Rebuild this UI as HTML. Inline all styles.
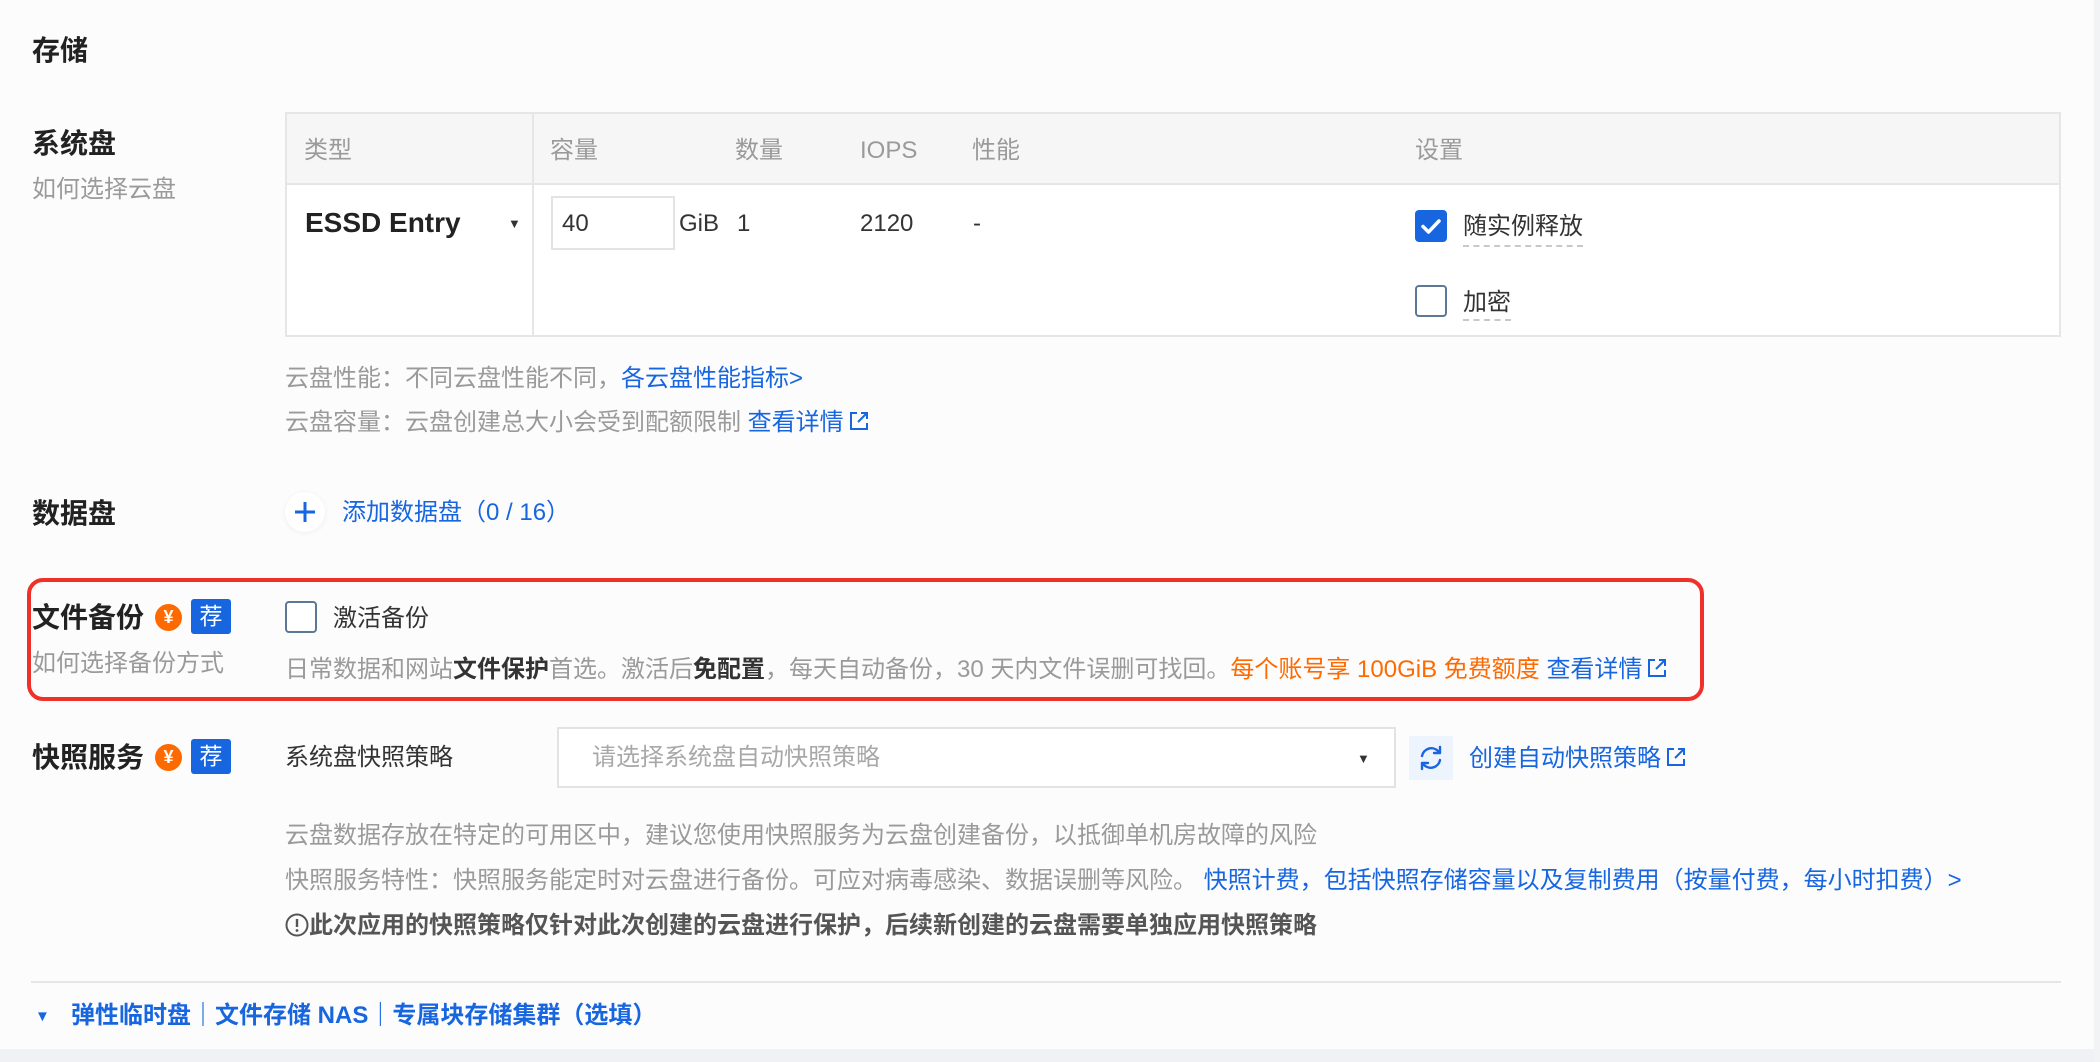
<!DOCTYPE html>
<html><head><meta charset="utf-8">
<style>
*{margin:0;padding:0;box-sizing:border-box}
body{width:2100px;height:1062px;background:#fcfcfc;font-family:"Liberation Sans","Noto Sans CJK SC",sans-serif;font-size:24px;color:#333;position:relative;overflow:hidden}
.a{position:absolute;white-space:nowrap;line-height:1}
.t{font-size:28px;font-weight:bold;color:#222}
.g{color:#9a9a9a}
.b{color:#1766e0}
.o{color:#ff6a00}
.cb{position:absolute;width:32px;height:32px;border:2px solid #5b7896;border-radius:4px;background:#fff}
.yen{position:absolute;width:27px;height:27px;border-radius:50%;background:#ff6a00;color:#fff;font-size:18px;font-weight:bold;text-align:center;line-height:27px}
.rec{position:absolute;width:40px;height:35px;border-radius:3px;background:#1766e0;color:#fff;font-size:23px;text-align:center;line-height:35px}
.ext{display:inline-block;vertical-align:-2px;margin-left:4px}
</style></head><body>
<div class="a t" style="left:32px;top:37px">存储</div>

<div class="a t" style="left:32px;top:130px">系统盘</div>
<div class="a g" style="left:32px;top:178px">如何选择云盘</div>

<div style="position:absolute;left:285px;top:112px;width:1776px;height:225px;border:2px solid #e6e6e6;background:#fff"></div>
<div style="position:absolute;left:287px;top:114px;width:1772px;height:71px;background:#f6f6f6;border-bottom:2px solid #e6e6e6"></div>
<div style="position:absolute;left:532px;top:114px;width:2px;height:221px;background:#e6e6e6"></div>
<div class="a g" style="left:304px;top:139px">类型</div>
<div class="a g" style="left:550px;top:139px">容量</div>
<div class="a g" style="left:735px;top:139px">数量</div>
<div class="a g" style="left:860px;top:139px">IOPS</div>
<div class="a g" style="left:972px;top:139px">性能</div>
<div class="a g" style="left:1415px;top:139px">设置</div>

<div class="a" style="left:305px;top:209px;font-size:28px;font-weight:bold;color:#222">ESSD Entry</div>
<div class="a" style="left:508px;top:217px;font-size:13px;color:#333">▼</div>
<div style="position:absolute;left:551px;top:196px;width:124px;height:54px;border:2px solid #e3e3e3;background:#fff"></div>
<div class="a" style="left:562px;top:212px;font-size:24px">40</div>
<div class="a" style="left:679px;top:212px;font-size:24px">GiB</div>
<div class="a" style="left:737px;top:212px;font-size:24px">1</div>
<div class="a" style="left:860px;top:212px;font-size:24px">2120</div>
<div class="a" style="left:973px;top:212px;font-size:24px">-</div>

<div style="position:absolute;left:1415px;top:210px;width:32px;height:32px;border-radius:4px;background:#1766e0">
<svg width="32" height="32" viewBox="0 0 32 32"><path d="M8 16.5l5.5 5.5 10.5-11" stroke="#fff" stroke-width="3.5" fill="none" stroke-linecap="round" stroke-linejoin="round"/></svg></div>
<div class="a" style="left:1463px;top:215px">随实例释放</div>
<div style="position:absolute;left:1463px;top:245px;width:120px;border-top:2px dashed #c8c8c8"></div>
<div class="cb" style="left:1415px;top:285px"></div>
<div class="a" style="left:1463px;top:291px">加密</div>
<div style="position:absolute;left:1463px;top:319px;width:48px;border-top:2px dashed #c8c8c8"></div>

<div class="a g" style="left:285px;top:367px">云盘性能：不同云盘性能不同，<span class="b">各云盘性能指标&gt;</span></div>
<div class="a g" style="left:285px;top:410px">云盘容量：云盘创建总大小会受到配额限制 <span class="b">查看详情<svg class="ext" width="22" height="22" viewBox="0 0 22 22"><path d="M9 3H3v16h16v-6M13 3h6v6M19 3l-9 9" stroke="#1766e0" stroke-width="2" fill="none"/></svg></span></div>

<div class="a t" style="left:32px;top:500px">数据盘</div>
<div style="position:absolute;left:285px;top:492px;width:40px;height:40px;border-radius:50%;background:#fff;box-shadow:0 1px 6px rgba(0,0,0,.06)">
<svg width="40" height="40" viewBox="0 0 40 40"><path d="M20 10v20M10 20h20" stroke="#1766e0" stroke-width="3"/></svg></div>
<div class="a b" style="left:342px;top:501px">添加数据盘（0 / 16）</div>

<div style="position:absolute;left:27px;top:578px;width:1677px;height:123px;border:4px solid #f2302a;border-radius:16px"></div>
<div class="a t" style="left:32px;top:604px">文件备份</div>
<div class="yen" style="left:155px;top:604px">¥</div>
<div class="rec" style="left:191px;top:599px">荐</div>
<div class="a g" style="left:32px;top:652px">如何选择备份方式</div>
<div class="cb" style="left:285px;top:601px"></div>
<div class="a" style="left:333px;top:607px">激活备份</div>
<div class="a g" style="left:285px;top:657px">日常数据和网站<b style="color:#333">文件保护</b>首选。激活后<b style="color:#333">免配置</b>，每天自动备份，30 天内文件误删可找回。<span class="o">每个账号享 100GiB 免费额度</span> <span class="b">查看详情<svg class="ext" width="22" height="22" viewBox="0 0 22 22"><path d="M9 3H3v16h16v-6M13 3h6v6M19 3l-9 9" stroke="#1766e0" stroke-width="2" fill="none"/></svg></span></div>

<div class="a t" style="left:32px;top:744px">快照服务</div>
<div class="yen" style="left:155px;top:744px">¥</div>
<div class="rec" style="left:191px;top:739px">荐</div>
<div class="a" style="left:285px;top:746px">系统盘快照策略</div>
<div style="position:absolute;left:557px;top:727px;width:839px;height:61px;border:2px solid #e3e3e3;background:#fff"></div>
<div class="a" style="left:592px;top:746px;color:#a8a8a8">请选择系统盘自动快照策略</div>
<div class="a" style="left:1357px;top:752px;font-size:13px;color:#333">▼</div>
<div style="position:absolute;left:1409px;top:736px;width:44px;height:44px;background:#eef4fd">
<svg width="44" height="44" viewBox="0 0 44 44"><path d="M13 20a9.5 9.5 0 0 1 16-5l2 2M31 24a9.5 9.5 0 0 1-16 5l-2-2M31 11v6h-6M13 33v-6h6" stroke="#1766e0" stroke-width="2.4" fill="none" stroke-linecap="round" stroke-linejoin="round"/></svg></div>
<div class="a b" style="left:1469px;top:746px">创建自动快照策略<svg class="ext" width="22" height="22" viewBox="0 0 22 22"><path d="M9 3H3v16h16v-6M13 3h6v6M19 3l-9 9" stroke="#1766e0" stroke-width="2" fill="none"/></svg></div>

<div class="a g" style="left:285px;top:824px">云盘数据存放在特定的可用区中，建议您使用快照服务为云盘创建备份，以抵御单机房故障的风险</div>
<div class="a g" style="left:285px;top:869px">快照服务特性：快照服务能定时对云盘进行备份。可应对病毒感染、数据误删等风险。 <span class="b">快照计费，包括快照存储容量以及复制费用（按量付费，每小时扣费）&gt;</span></div>
<div class="a" style="left:285px;top:913px;font-weight:bold;color:#555"><svg width="24" height="24" viewBox="0 0 24 24" style="vertical-align:-4px"><circle cx="12" cy="12" r="10.5" stroke="#555" stroke-width="2" fill="none"/><path d="M12 6v8" stroke="#555" stroke-width="2.4"/><circle cx="12" cy="17.5" r="1.4" fill="#555"/></svg>此次应用的快照策略仅针对此次创建的云盘进行保护，后续新创建的云盘需要单独应用快照策略</div>

<div style="position:absolute;left:31px;top:981px;width:2030px;height:2px;background:#e6e6e6"></div>
<div class="a b" style="left:35px;top:1009px;font-size:15px">▼</div>
<div class="a b" style="left:71px;top:1004px;font-weight:bold">弹性临时盘｜文件存储 NAS｜专属块存储集群（选填）</div>

<div style="position:absolute;left:0;top:1049px;width:2100px;height:13px;background:#f0f1f4"></div>
<div style="position:absolute;left:2094px;top:0;width:6px;height:1062px;background:#f2f3f5"></div>
</body></html>
